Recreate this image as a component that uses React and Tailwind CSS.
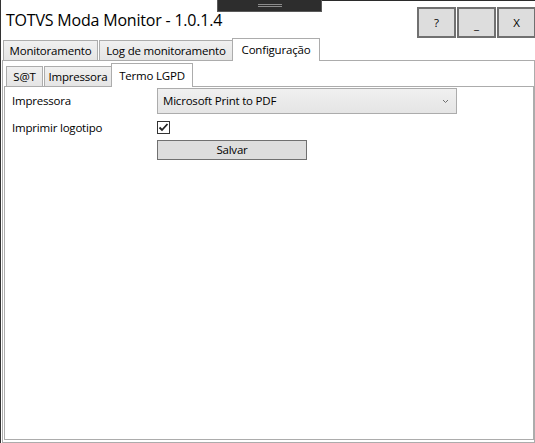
import React from "react";

const font = { fontFamily: '"Segoe UI", "Open Sans", "Noto Sans", sans-serif' };

function Tab({ children, selected, w, h, first }) {
  if (selected) {
    return (
      <div
        className={`relative z-10 -ml-px -mb-px flex items-center justify-center bg-white border border-b-0 border-[#acacac] ${w} ${h}`}
      >
        {children}
      </div>
    );
  }
  return (
    <div
      className={`flex items-center justify-center bg-linear-to-b from-[#f0f0f0] to-[#e5e5e5] border border-b-0 border-[#acacac] ${w} ${h} ${first ? "" : "ml-px"}`}
    >
      {children}
    </div>
  );
}

export default function App() {
  return (
    <div
      className="relative w-[535px] h-[443px] bg-white border-l border-[#333333] flex flex-col overflow-hidden text-[11.5px] tracking-[-0.2px] text-black leading-none"
      style={font}
    >
      {/* top dark line + gripper */}
      <div className="absolute top-0 left-[320px] right-0 h-px bg-[#2b2b2b]" />
      <div className="absolute top-0 left-[216px] w-[105px] h-[12px] bg-[#2d2d2d] border border-t-0 border-[#5a5a5a] flex flex-col items-center justify-center gap-[1px]">
        <div className="w-[24px] h-px bg-[#8c8c8c]" />
        <div className="w-[24px] h-px bg-[#8c8c8c]" />
      </div>

      {/* header */}
      <div className="flex h-[38px] shrink-0">
        <div className="pl-[5px] pt-[12px] text-[16px] leading-none tracking-[-0.2px]">
          TOTVS Moda Monitor - 1.0.1.4
        </div>
        <div className="ml-auto pt-[7px] flex gap-[1px] -mr-[1px]">
          <div className="w-[39px] h-[31px] border-2 border-[#707070] bg-[#dddddd] flex items-center justify-center">
            ?
          </div>
          <div className="w-[39px] h-[31px] border-2 border-[#707070] bg-[#dddddd] flex items-end justify-center pb-[6px]">
            _
          </div>
          <div className="w-[39px] h-[31px] border-2 border-[#707070] bg-[#dddddd] flex items-center justify-center">
            X
          </div>
        </div>
      </div>

      {/* outer tabs */}
      <div className="flex items-end h-[22px] shrink-0 pl-[2px]">
        <Tab first w="w-[95px]" h="h-[20px]">Monitoramento</Tab>
        <Tab w="w-[134px]" h="h-[20px]">Log de monitoramento</Tab>
        <Tab selected w="w-[88px]" h="h-[23px]">Configuração</Tab>
      </div>

      {/* outer content */}
      <div className="flex-1 ml-px border border-[#acacac] pl-px pb-[2px] flex flex-col min-h-0">
        {/* inner tabs */}
        <div className="flex items-end h-[25px] shrink-0 pl-[2px]">
          <Tab first w="w-[37px]" h="h-[20px]">S@T</Tab>
          <Tab w="w-[68px]" h="h-[20px]">Impressora</Tab>
          <Tab selected w="w-[82px]" h="h-[24px]">Termo LGPD</Tab>
        </div>

        {/* inner content */}
        <div className="flex-1 border border-[#acacac] pl-[7px] pt-[1px]">
          <div className="grid grid-cols-[145px_300px] grid-rows-[26px_26px_20px]">
            <div className="flex items-center">Impressora</div>
            <div className="flex items-center justify-between border border-[#acacac] bg-linear-to-b from-[#f0f0f0] to-[#e5e5e5] pl-[5px] pr-[6px]">
              <span>Microsoft Print to PDF</span>
              <svg width="7" height="5" viewBox="0 0 7 5" className="mr-[1px]">
                <path d="M1 1 L3.5 3.5 L6 1" fill="none" stroke="#707070" strokeWidth="1" />
              </svg>
            </div>

            <div className="flex items-center pt-[2px]">Imprimir logotipo</div>
            <div className="flex items-center">
              <div className="w-[13px] h-[13px] border border-[#333333] bg-white flex items-center justify-center">
                <svg width="11" height="11" viewBox="0 0 11 11">
                  <path d="M1.5 5.5 L4 8 L9.5 2" fill="none" stroke="#222222" strokeWidth="1.8" />
                </svg>
              </div>
            </div>

            <div />
            <div className="w-[150px] border border-[#707070] bg-[#dddddd] flex items-center justify-center">
              Salvar
            </div>
          </div>
        </div>
      </div>
    </div>
  );
}
